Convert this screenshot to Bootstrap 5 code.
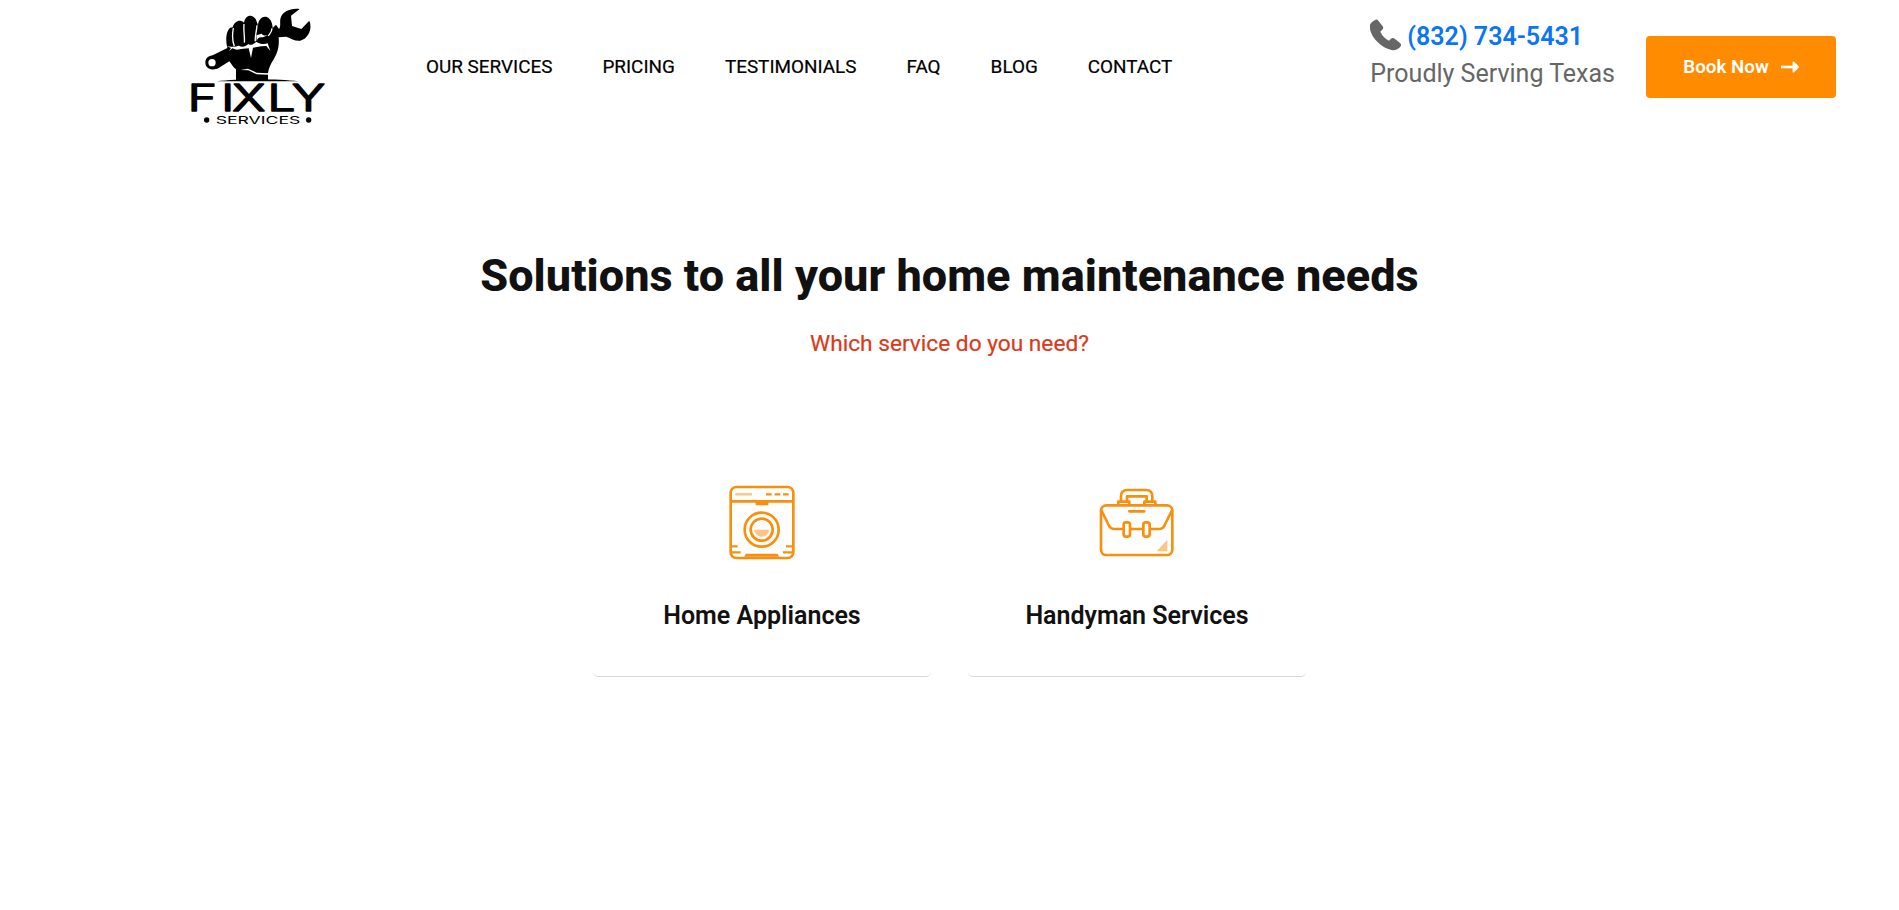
<!DOCTYPE html>
<html lang="en">
<head>
<meta charset="utf-8">
<meta name="viewport" content="width=device-width, initial-scale=1">
<title>Fixly Services</title>
<link href="https://cdn.jsdelivr.net/npm/bootstrap@5.3.0/dist/css/bootstrap.min.css" rel="stylesheet">
<style>
body{font-family:Roboto,"Liberation Sans",sans-serif;color:#111;background:#fff;overflow:hidden}
.site-header{height:134px;padding:0 63px 0 180px}
.brand-logo{width:160px;height:134px}
.main-menu{gap:50px;margin:-2px 0 0 86px}
.site-header .main-menu .nav-link{font-size:18.9px;line-height:27px;color:#000;padding:0;white-space:nowrap;-webkit-text-stroke:.2px #000}
.contact-info{font-size:25px;line-height:37px;color:#666;margin-right:31px;margin-top:-24px;white-space:nowrap}
.contact-info a{color:#0b75f5;font-weight:600}
.book-btn{width:190px;height:62px;background:#ff8c00;color:#fff;font-size:18.8px;font-weight:600;border-radius:4px;gap:12px;border:0;padding:0}
.book-btn:hover{background:#e67e00;color:#fff}
.services{padding-top:114px}
.services h1{font-size:45px;line-height:56px;font-weight:800;letter-spacing:.04px;margin:0}
.subtitle{font-size:22.7px;line-height:34px;color:#db3a1a;margin:23px 0 0;-webkit-text-stroke:.2px #db3a1a}
.service-row{gap:37px;margin-top:82px}
.service-card{width:338px;height:234px;border:0;border-bottom:1px solid #d8d8d8;border-radius:5px;padding-top:32px}
.service-card h2{font-size:25px;line-height:30px;font-weight:600;margin:31px 0 0}
</style>
</head>
<body>
<header class="site-header navbar navbar-expand flex-nowrap justify-content-start">
  <a class="brand-logo d-block flex-shrink-0" href="#" aria-label="Fixly Services">
    <svg width="160" height="130" viewBox="0 0 480 390" class="d-block">
      <path d="M76 188C76 174 87 167 98 166L142 144C136 120 138 92 151 83L158 82C164 62 181 57 192 68C196 44 217 40 228 59L234 76C236 52 255 44 268 56C276 64 277 74 278 84L288 74L297 87C304 77 298 65 302 53C308 35 330 24 359 27L333 47L336 78L364 87L388 62C398 85 386 115 361 122C347 125 334 115 319 110L296 112C299 145 289 166 276 186C269 199 266 207 264 220V241H168V208C160 203 155 193 148 184L116 204C98 214 76 206 76 188Z" fill="#000"/>
      <circle cx="96" cy="188" r="11" fill="#fff"/>
      <path d="M160 84C156 106 156 121 163 139M192 72C190 95 195 112 193 128M231 76C230 96 224 108 226 124M276 85C276 99 267 102 265 108" fill="none" stroke="#fff" stroke-width="4"/>
      <path d="M139 137C156 143 169 139 177 137C188 145 199 137 205 132C214 138 220 132 229 126C239 132 253 134 263 130L271 153L259 138L244 139L219 143L213 174L206 145L189 146L170 149L157 145L147 154L153 144Z" fill="#fff"/>
      <path d="M229 106L245 101C249 107 257 107 263 106L249 112C238 110 231 115 230 124Z" fill="#fff"/>
      <path d="M181 210L204 206L230 218L265 220V224L230 223L205 211Z" fill="#fff"/>
      <path d="M110 244C180 236 290 236 356 244Z" fill="#000"/>
      <g transform="scale(1.36 1)" font-family="Inter, sans-serif" font-size="109" font-weight="300" fill="#000" stroke="#000" stroke-width="5" stroke-linejoin="round">
        <text y="334" x="17 91 116 193 247">FIXLY</text>
      </g>
      <text x="107" y="372" textLength="254" lengthAdjust="spacingAndGlyphs" font-family="Inter, sans-serif" font-size="32" fill="#000">SERVICES</text>
      <circle cx="80" cy="360" r="8"/><circle cx="386" cy="360" r="8"/>
    </svg>
  </a>
  <nav class="main-menu navbar-nav">
    <a class="nav-link" href="#">OUR SERVICES</a>
    <a class="nav-link" href="#">PRICING</a>
    <a class="nav-link" href="#">TESTIMONIALS</a>
    <a class="nav-link" href="#">FAQ</a>
    <a class="nav-link" href="#">BLOG</a>
    <a class="nav-link" href="#">CONTACT</a>
  </nav>
  <div class="contact-info ms-auto">
    <div class="d-flex align-items-center">
      <svg width="37" height="32" viewBox="0 0 111 96" class="flex-shrink-0 mb-1"><path d="M14 4Q20-1 25 5L38 22Q42 28 36 33L31 38Q39 56 57 65L63 59Q69 55 75 60L90 72Q96 77 91 83C84 91 75 95 64 93C33 87 1 54-1 24C-1 14 5 9 14 4Z" fill="#666"/></svg>
      <a class="text-decoration-none" href="#">(832) 734-5431</a>
    </div>
    <div>Proudly Serving Texas</div>
  </div>
  <a class="book-btn btn d-flex align-items-center justify-content-center flex-shrink-0" href="#">
    <span>Book Now</span>
    <svg width="18" height="12" viewBox="0 0 18 12"><path d="M0 6H14" stroke="#fff" stroke-width="2.6"/><path d="M12.5 1.5L17 6L12.5 10.5Z" fill="#fff" stroke="#fff" stroke-width="1.8" stroke-linejoin="round"/></svg>
  </a>
</header>
<main class="services text-center">
  <h1>Solutions to all your home maintenance needs</h1>
  <p class="subtitle">Which service do you need?</p>
  <div class="service-row d-flex justify-content-center">
    <a class="service-card card align-items-center text-decoration-none text-reset" href="#">
      <svg class="flex-shrink-0" width="100" height="95" viewBox="-8 1 300 285" fill="none" stroke="#f8900f" stroke-width="8">
        <rect x="48" y="37" width="188" height="213" rx="17"/>
        <path d="M48 80H236M123 88H161"/>
        <path d="M154 59H171M180 59H197M205 59H222" stroke-width="7"/>
        <path d="M62 59H112" stroke="#fcc487" stroke-width="7"/>
        <circle cx="141" cy="165" r="51"/><circle cx="141" cy="165" r="33"/>
        <path d="M119 165H163C160 193 122 193 119 165Z" fill="#fcc487" stroke="none"/>
        <path d="M48 215H69M48 233H78M236 215H214M236 233H205" stroke-width="7"/>
        <path d="M88 246L94 237H188L194 246Z" fill="#f8900f" stroke="none"/>
      </svg>
      <h2>Home Appliances</h2>
    </a>
    <a class="service-card card align-items-center text-decoration-none text-reset" href="#">
      <svg class="flex-shrink-0" width="100" height="95" viewBox="7 1 300 285" fill="none" stroke="#f8900f" stroke-width="8" stroke-linejoin="round" stroke-linecap="round">
        <rect x="49" y="92" width="214" height="149" rx="16"/>
        <path d="M51 109L72 151Q77 163 89 163H116M138 163H174M196 163H223Q235 163 240 151L261 109M134 110H179"/>
        <rect x="117" y="143" width="19" height="43" rx="7"/><rect x="176" y="143" width="19" height="43" rx="7"/>
        <path d="M101 90V81H134V90M179 90V81H212V90M109 79V65Q109 46 128 46H184Q203 46 203 65V79M127 79V65H186V79"/>
        <path d="M248 195V230H216Z" fill="#fcc487" stroke="none"/>
      </svg>
      <h2>Handyman Services</h2>
    </a>
  </div>
</main>
<script src="https://cdn.jsdelivr.net/npm/bootstrap@5.3.0/dist/js/bootstrap.bundle.min.js"></script>
</body>
</html>
